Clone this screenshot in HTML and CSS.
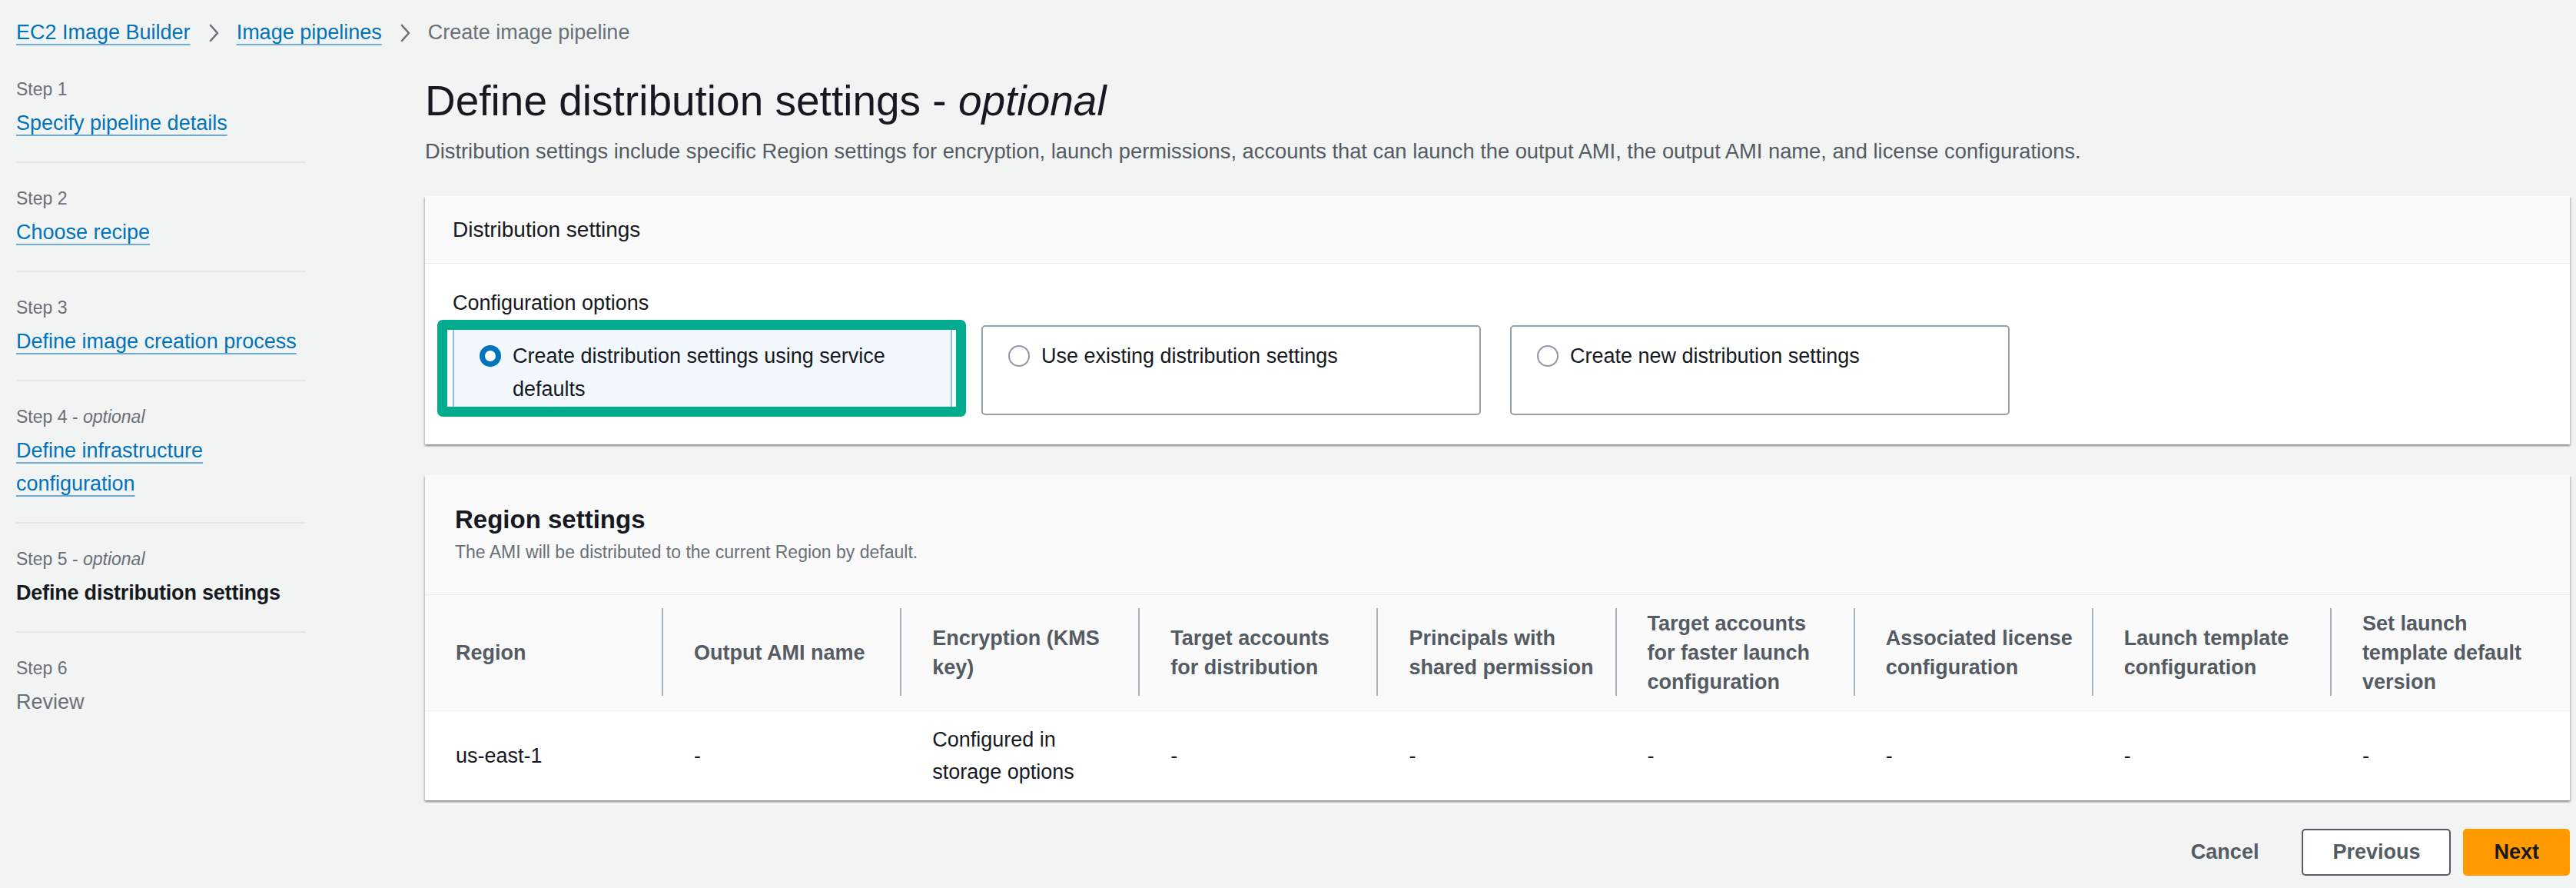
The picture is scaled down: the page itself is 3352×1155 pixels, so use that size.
FILE: index.html
```html
<!DOCTYPE html>
<html lang="en">
<head>
<meta charset="utf-8">
<title>Create image pipeline</title>
<link rel="stylesheet" href="styles.css">
</head>
<body>
<div class="page">
  <nav class="breadcrumbs">
    <a class="crumb-link" href="#">EC2 Image Builder</a>
    <svg class="chev" viewBox="0 0 20 30" width="20" height="30"><polyline points="6,5 15,15 6,25" fill="none" stroke="#687078" stroke-width="2.6" stroke-linecap="round" stroke-linejoin="round"/></svg>
    <a class="crumb-link" href="#">Image pipelines</a>
    <svg class="chev" viewBox="0 0 20 30" width="20" height="30"><polyline points="6,5 15,15 6,25" fill="none" stroke="#687078" stroke-width="2.6" stroke-linecap="round" stroke-linejoin="round"/></svg>
    <span class="crumb-current">Create image pipeline</span>
  </nav>

  <div class="layout">
    <aside class="steps">
      <ol class="step-list">
        <li class="step">
          <div class="step-label">Step 1</div>
          <div class="step-name"><a class="step-link" href="#">Specify pipeline details</a></div>
        </li>
        <li class="step">
          <div class="step-label">Step 2</div>
          <div class="step-name"><a class="step-link" href="#">Choose recipe</a></div>
        </li>
        <li class="step">
          <div class="step-label">Step 3</div>
          <div class="step-name"><a class="step-link" href="#">Define image creation process</a></div>
        </li>
        <li class="step">
          <div class="step-label">Step 4 - <i>optional</i></div>
          <div class="step-name"><a class="step-link" href="#">Define infrastructure configuration</a></div>
        </li>
        <li class="step">
          <div class="step-label">Step 5 - <i>optional</i></div>
          <div class="step-name step-active">Define distribution settings</div>
        </li>
        <li class="step">
          <div class="step-label">Step 6</div>
          <div class="step-name step-disabled">Review</div>
        </li>
      </ol>
    </aside>

    <main class="main">
      <h1 class="title">Define distribution settings - <i>optional</i></h1>
      <p class="desc">Distribution settings include specific Region settings for encryption, launch permissions, accounts that can launch the output AMI, the output AMI name, and license configurations.</p>

      <section class="panel">
        <div class="panel-header">Distribution settings</div>
        <div class="panel-body">
          <div class="field-label">Configuration options</div>
          <div class="tiles">
            <div class="tile tile-selected">
              <span class="radio radio-on"></span>
              <span class="tile-text">Create distribution settings using service defaults</span>
              <span class="highlight"></span>
            </div>
            <div class="tile">
              <span class="radio"></span>
              <span class="tile-text">Use existing distribution settings</span>
            </div>
            <div class="tile">
              <span class="radio"></span>
              <span class="tile-text">Create new distribution settings</span>
            </div>
          </div>
        </div>
      </section>

      <section class="panel panel-table">
        <div class="table-header">
          <h2 class="table-title">Region settings</h2>
          <div class="table-sub">The AMI will be distributed to the current Region by default.</div>
        </div>
        <table class="region-table">
          <thead>
            <tr>
              <th>Region</th>
              <th>Output AMI name</th>
              <th>Encryption (KMS key)</th>
              <th>Target accounts for distribution</th>
              <th>Principals with shared permission</th>
              <th>Target accounts for faster launch configuration</th>
              <th>Associated license configuration</th>
              <th>Launch template configuration</th>
              <th>Set launch template default version</th>
            </tr>
          </thead>
          <tbody>
            <tr>
              <td>us-east-1</td>
              <td>-</td>
              <td>Configured in storage options</td>
              <td>-</td>
              <td>-</td>
              <td>-</td>
              <td>-</td>
              <td>-</td>
              <td>-</td>
            </tr>
          </tbody>
        </table>
      </section>

      <div class="actions">
        <button class="btn btn-link" type="button">Cancel</button>
        <button class="btn btn-normal" type="button">Previous</button>
        <button class="btn btn-primary" type="button">Next</button>
      </div>
    </main>
  </div>
</div>
</body>
</html>
```

FILE: styles.css
```css
* { box-sizing: border-box; }

html, body {
  margin: 0;
  padding: 0;
  background: #f2f3f3;
}

body {
  font-family: "Liberation Sans", Arial, sans-serif;
  font-size: 27px;
  line-height: 43px;
  color: #16191f;
}

.page {
  padding: 21px 8px 0 21px;
}

/* Breadcrumbs */
.breadcrumbs {
  display: flex;
  align-items: center;
  height: 43px;
  gap: 20px;
}

.crumb-link {
  color: #0073bb;
  text-decoration: underline;
  text-decoration-color: #6aa9d8;
  text-decoration-thickness: 2px;
  text-underline-offset: 6px;
}

.chev { display: block; }

.crumb-current { color: #687078; }

/* Layout */
.layout {
  display: flex;
  align-items: flex-start;
}

.steps {
  width: 377px;
  flex: none;
  margin-top: 6px;
}

.step-list {
  list-style: none;
  margin: 0;
  padding: 0;
}

.step {
  padding: 28px 0;
  border-bottom: 2px solid #e3e6e8;
}

.step:last-child { border-bottom: none; }

.step-label {
  font-size: 23px;
  line-height: 37px;
  color: #687078;
}

.step-name {
  margin-top: 4px;
  line-height: 43px;
}

.step-link {
  color: #0073bb;
  text-decoration: underline;
  text-decoration-color: #6aa9d8;
  text-decoration-thickness: 2px;
  text-underline-offset: 6px;
}

.step-active {
  font-weight: 700;
  color: #16191f;
  letter-spacing: -0.2px;
}

.step-disabled { color: #687078; }

/* Main */
.main {
  flex: 1;
  margin-left: 155px;
  padding-top: 36px;
}

.title {
  margin: 0;
  font-size: 55px;
  line-height: 62px;
  font-weight: 400;
  color: #16191f;
}

.desc {
  margin: 13px 0 0;
  font-size: 27.3px;
  color: #545b64;
}

.panel {
  margin-top: 37px;
  background: #ffffff;
  box-shadow: 0 2px 2px rgba(0, 28, 36, 0.3), 2px 2px 2px rgba(0, 28, 36, 0.12), -2px 2px 2px rgba(0, 28, 36, 0.12);
}

.panel-header {
  background: #fafafa;
  padding: 22px 36px;
  font-size: 28px;
  line-height: 43px;
  border-bottom: 1px solid #eaeded;
}

.panel-body {
  padding: 30px 36px 38px;
}

.field-label {
  line-height: 43px;
  margin-bottom: 7px;
}

.tiles {
  display: grid;
  grid-template-columns: repeat(3, 650px);
  column-gap: 38px;
}

.tile {
  position: relative;
  display: flex;
  align-items: flex-start;
  gap: 15px;
  height: 117px;
  padding: 17px 30px 10px 33px;
  border: 2px solid #95a1ab;
  border-radius: 5px;
  background: #ffffff;
}

.tile-selected {
  border-color: #8fbfe6;
  background: #f2f8fd;
}

.radio {
  flex: none;
  width: 28px;
  height: 28px;
  margin-top: 7px;
  border-radius: 50%;
  border: 2px solid #8d99a5;
  background: #ffffff;
}

.radio-on {
  border: 7px solid #0073bb;
}

.tile-text {
  line-height: 43px;
}

.highlight {
  position: absolute;
  top: -9px;
  left: -22px;
  width: 688px;
  height: 126px;
  border: 13px solid #00ab8e;
  border-radius: 7px;
  pointer-events: none;
}

/* Table panel */
.panel-table { margin-top: 40px; }

.table-header {
  background: #fafafa;
  padding: 35px 39px 38px;
  border-bottom: 1px solid #eaeded;
}

.table-title {
  margin: 0 0 2px;
  font-size: 33px;
  line-height: 46px;
  font-weight: 700;
  color: #16191f;
}

.table-sub {
  font-size: 23px;
  line-height: 34px;
  color: #687078;
}

.region-table {
  width: 100%;
  table-layout: fixed;
  border-collapse: collapse;
}

.region-table th {
  position: relative;
  background: #fafafa;
  text-align: left;
  vertical-align: middle;
  padding: 18px 24px 18px 40px;
  font-weight: 700;
  line-height: 38px;
  color: #545b64;
  border-bottom: 1px solid #eaeded;
}

.region-table th:not(:last-child)::after {
  content: "";
  position: absolute;
  right: 0;
  top: 17px;
  bottom: 19px;
  width: 2px;
  background: #a5afb8;
}

.region-table td {
  padding: 16px 24px 16px 40px;
  line-height: 42px;
  vertical-align: middle;
  color: #16191f;
}

/* Actions */
.actions {
  display: flex;
  justify-content: flex-end;
  gap: 16px;
  margin-top: 37px;
}

.btn {
  height: 61px;
  padding: 0 38px;
  border: 2px solid transparent;
  border-radius: 5px;
  background: transparent;
  font-family: "Liberation Sans", Arial, sans-serif;
  font-size: 27px;
  font-weight: 700;
  line-height: 57px;
  color: #545b64;
}

.btn-normal {
  background: #ffffff;
  border-color: #545b64;
}

.btn-primary {
  background: #ff9900;
  border-color: #ff9900;
  color: #16191f;
}
```
